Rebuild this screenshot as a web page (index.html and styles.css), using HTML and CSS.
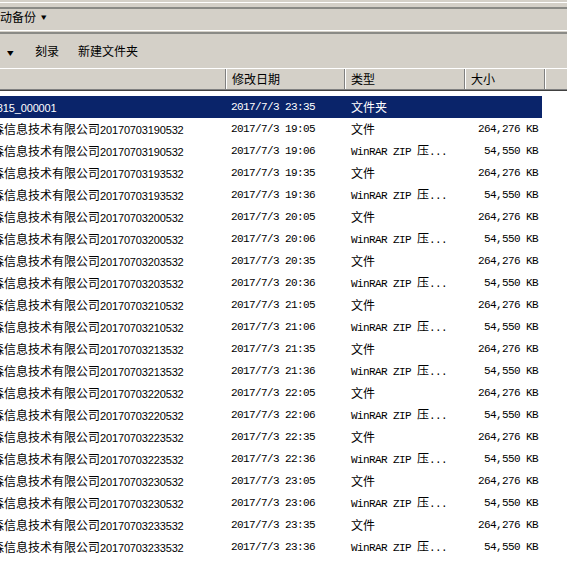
FILE: index.html
```html
<!DOCTYPE html>
<html lang="zh">
<head>
<meta charset="utf-8">
<link rel="stylesheet" href="styles.css">
</head>
<body>
<div class="window">
  <div class="addrbar">
    <span class="crumb">自动备份</span>
    <span class="caret">▾</span>
  </div>
  <div class="toolbar">
    <span class="tb-caret">▾</span>
    <span class="tb-btn">刻录</span>
    <span class="tb-btn">新建文件夹</span>
  </div>
  <div class="header">
    <div class="hcell hname"></div>
    <div class="hcell hdate">修改日期</div>
    <div class="hcell htype">类型</div>
    <div class="hcell hsize">大小</div>
    <div class="hcell hrest"></div>
  </div>
  <div class="list" id="list">
    <div class="row selected">
      <div class="c name"><span class="clip"><span class="dig">20170815_000001</span></span></div>
      <div class="c date">2017/7/3 23:35</div>
      <div class="c type">文件夹</div>
      <div class="c size"></div>
    </div>
  </div>
</div>
<script>
(function(){
  var data = [
    ["20170703190532","19:05",0],["20170703190532","19:06",1],
    ["20170703193532","19:35",0],["20170703193532","19:36",1],
    ["20170703200532","20:05",0],["20170703200532","20:06",1],
    ["20170703203532","20:35",0],["20170703203532","20:36",1],
    ["20170703210532","21:05",0],["20170703210532","21:06",1],
    ["20170703213532","21:35",0],["20170703213532","21:36",1],
    ["20170703220532","22:05",0],["20170703220532","22:06",1],
    ["20170703223532","22:35",0],["20170703223532","22:36",1],
    ["20170703230532","23:05",0],["20170703230532","23:06",1],
    ["20170703233532","23:35",0],["20170703233532","23:36",1]
  ];
  var list = document.getElementById('list');
  data.forEach(function(d){
    var r = document.createElement('div');
    r.className = 'row';
    var type = d[2] ? '<span class="mono">WinRAR ZIP </span>压<span class="mono">...</span>' : '文件';
    var size = d[2] ? '54,550 KB' : '264,276 KB';
    r.innerHTML = '<div class="c name"><span class="clip">森信息技术有限公司<span class="dig">' + d[0] + '</span></span></div>' +
      '<div class="c date">2017/7/3 ' + d[1] + '</div>' +
      '<div class="c type">' + type + '</div>' +
      '<div class="c size">' + size + '</div>';
    list.appendChild(r);
  });
})();
</script>
</body>
</html>
```

FILE: styles.css
```css
html, body {
  margin: 0;
  padding: 0;
}
body {
  background: #d4d0c8;
  font-family: "Noto Sans CJK SC", "Liberation Sans", sans-serif;
  font-size: 12px;
  color: #000;
  width: 567px;
  height: 576px;
  overflow: hidden;
}
.window {
  display: flex;
  flex-direction: column;
  height: 576px;
}
.addrbar {
  height: 21px;
  margin-top: 2px;
  border-top: 1px solid #ffffff;
  box-shadow: inset 0 4px 0 #d4d0c8, inset 0 6px 0 #8a8a86;
  padding-top: 6px;
  display: flex;
  align-items: flex-start;
  gap: 5px;
  border-bottom: 1px solid #ffffff;
}
.crumb {
  margin-left: -12px;
  line-height: 16px;
}
.caret {
  font-size: 9px;
  line-height: 16px;
  transform: scaleX(1.2);
}
.toolbar {
  margin-top: 1px;
  border-top: 2px solid #8a8a86;
  height: 32px;
  display: flex;
  align-items: center;
  padding-top: 1px;
}
.tb-caret {
  font-size: 10px;
  width: 13px;
  margin-left: 4px;
  text-align: center;
  transform: scaleX(1.3);
}
.tb-btn {
  margin-left: 18px;
  line-height: 16px;
}
.tb-btn + .tb-btn {
  margin-left: 19px;
}
.header {
  margin-top: 1px;
  height: 20px;
  display: flex;
  border-top: 1px solid #ffffff;
  border-bottom: 1px solid #808080;
  box-shadow: 0 1px 0 #404040;
}
.hcell {
  box-sizing: border-box;
  height: 20px;
  border-left: 1px solid #ffffff;
  border-right: 1px solid #808080;
  padding-left: 5px;
  line-height: 19px;
}
.hname { width: 226px; border-left: none; }
.hdate { width: 119px; }
.htype { width: 120px; }
.hsize { width: 80px; }
.hrest { flex: 1; border-right: none; }
.list {
  flex: 1;
  background: #ffffff;
  margin-top: 1px;
  padding-top: 5px;
  display: flex;
  flex-direction: column;
}
.row {
  display: grid;
  grid-template-columns: 226px 119px 120px 77px;
  width: 542px;
  height: 22px;
  align-items: center;
}
.row.selected {
  background: #0a246a;
  color: #ffffff;
}
.c {
  white-space: nowrap;
  overflow: hidden;
  line-height: 22px;
}
.clip {
  display: block;
  margin-left: -8px;
}
.selected .clip {
  margin-left: -33px;
}
.dig {
  font-family: "Liberation Sans", sans-serif;
  font-size: 11px;
  letter-spacing: -0.15px;
}
.date, .size, .mono {
  font-family: "Liberation Mono", monospace;
  font-size: 11px;
  letter-spacing: -0.6px;
}
.date { padding-left: 5px; }
.type { padding-left: 6px; }
.size {
  text-align: right;
  padding-right: 4px;
}
```
